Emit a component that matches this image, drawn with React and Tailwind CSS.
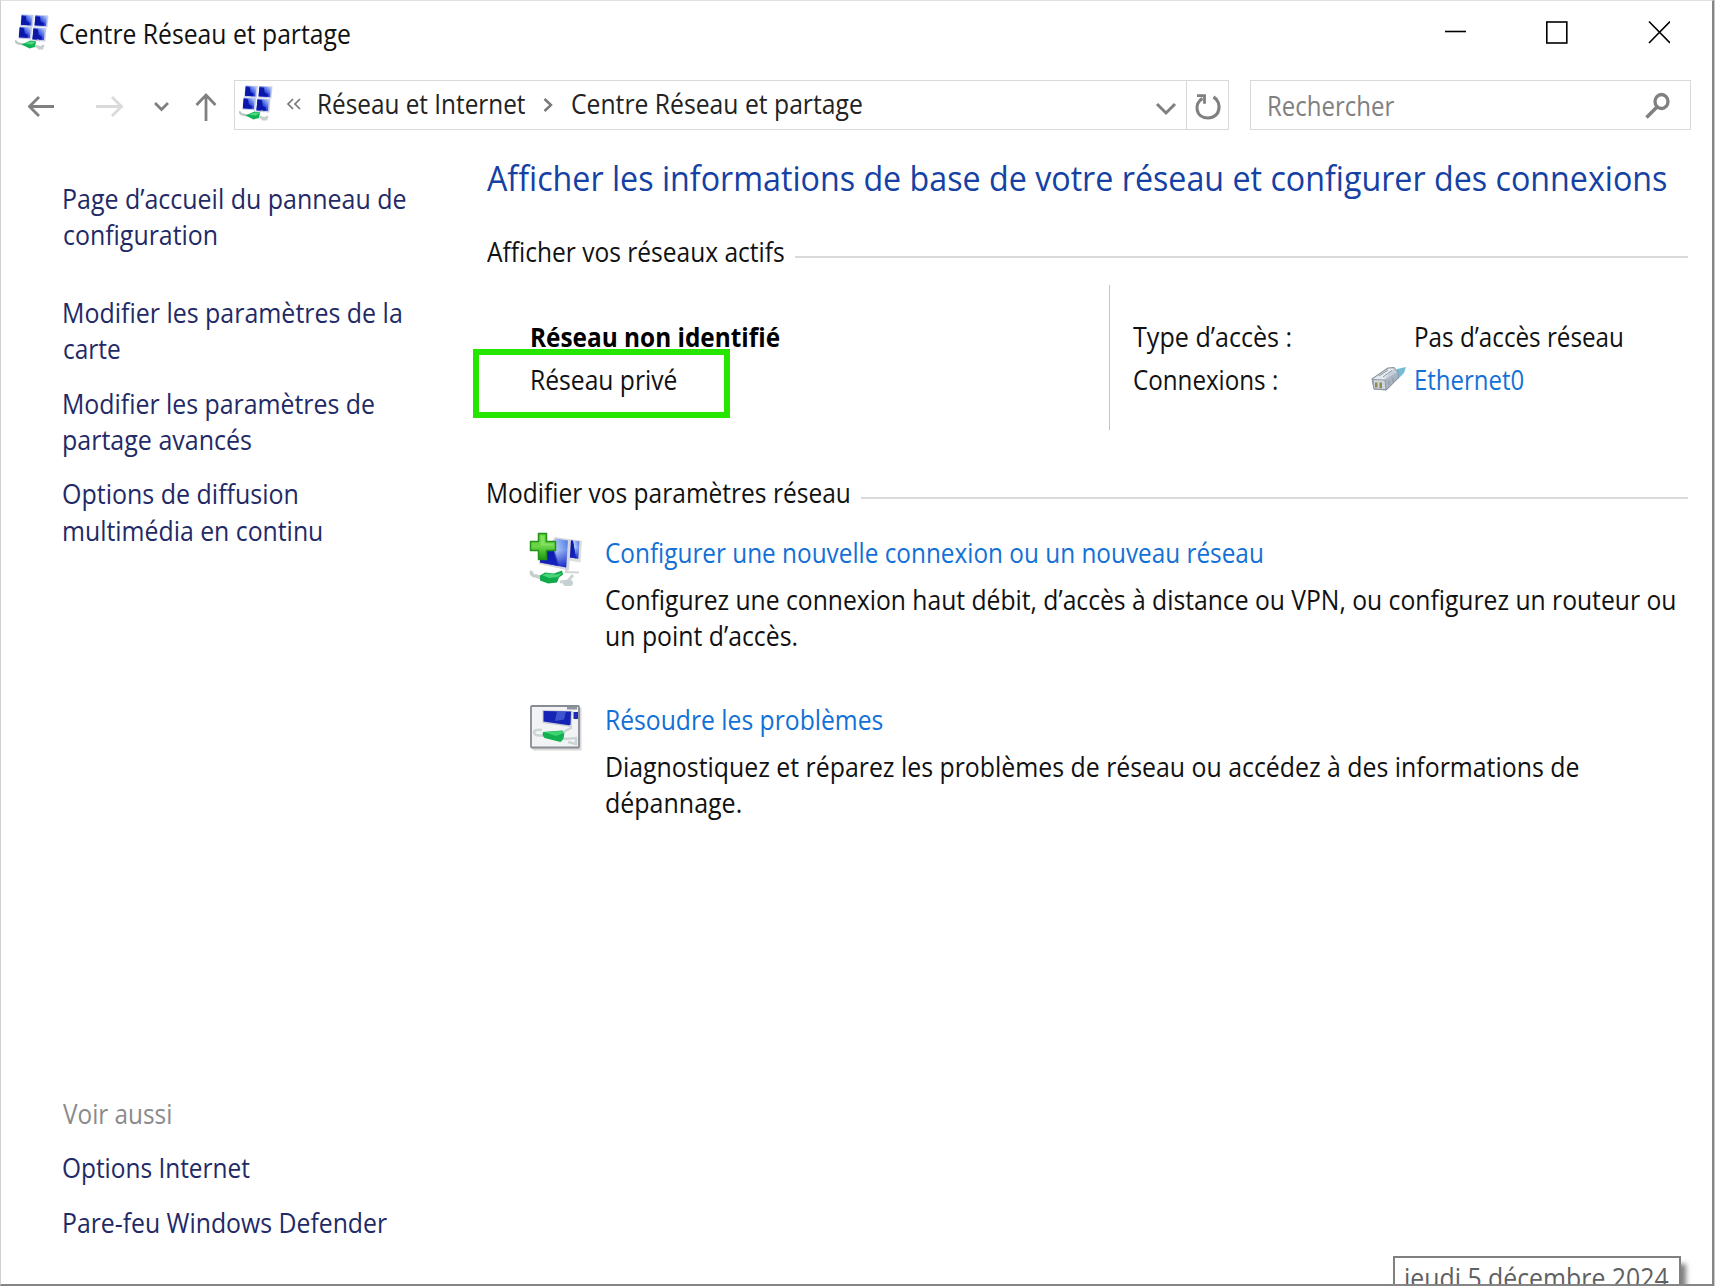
import { useLayoutEffect, useRef, useState } from 'react';

/* One line of text, condensed horizontally so that it fills its box. */
function Line({ w, className = '', children }) {
  const ref = useRef(null);
  const [k, setK] = useState(1);
  useLayoutEffect(() => {
    setK(w / ref.current.offsetWidth);
  }, [w]);
  return (
    <div className={`shrink-0 whitespace-nowrap ${className}`} style={{ width: w }}>
      <span ref={ref} className="inline-block origin-left" style={{ transform: `scaleX(${k})` }}>
        {children}
      </span>
    </div>
  );
}

function Monitor({ x, y, w = 12, h = 12 }) {
  return (
    <g transform={`translate(${x} ${y}) skewX(-5) skewY(4)`}>
      <rect x="-0.5" y="-0.8" width={w + 2} height={h + 1.4} fill="#c9cbe4" />
      <rect width={w} height={h - 0.8} fill="url(#screen)" />
      <path d={`M0 1h${w * 0.4}l1 ${h * 0.45}l${w * 0.3} 1.5V${h - 0.8}H0Z`} fill="#0a17a8" />
    </g>
  );
}

function NetworkIcon() {
  return (
    <svg width="35" height="38" viewBox="0 0 35 38" className="shrink-0">
      <defs>
        <linearGradient id="screen" x1="0" y1="1" x2="1" y2="0">
          <stop offset="0" stopColor="#1526c4" />
          <stop offset="0.5" stopColor="#2a45dc" />
          <stop offset="1" stopColor="#b9d0fb" />
        </linearGradient>
      </defs>
      <Monitor x={6.8} y={1} w={10.5} h={10.5} />
      <Monitor x={20.5} y={1.5} w={11.5} h={10.5} />
      <Monitor x={4.8} y={13} w={11} h={11} />
      <Monitor x={18.5} y={14} w={11.5} h={12} />
      <path d="M20 27.5l3-1.5 2 1" fill="none" stroke="#c8cccf" strokeWidth="1.2" />
      <path d="M1.5 26.5c-1 1 0 2.500 1.500 2.800l6 1.200" fill="none" stroke="#b9c6c0" strokeWidth="2.200" />
      <path d="M6.500 30.500l9-4 5.500 1-1 5.500-5.500 1.500Z" fill="#12b356" />
      <path d="M10 29.500l6-2 4 .6-3 2.400Z" fill="#4fdc84" />
      <path d="M20.500 32l5 1.500 3.500-2" fill="none" stroke="#c2ccc8" strokeWidth="2.500" />
      <rect x="22.500" y="32" width="6" height="3.600" rx="1.500" fill="#c6cfcc" />
    </svg>
  );
}

function AddNetworkIcon() {
  return (
    <svg width="56" height="58" viewBox="0 0 56 58" className="shrink-0">
      <defs>
        <linearGradient id="big" x1="0" y1="0.6" x2="1" y2="0.3">
          <stop offset="0" stopColor="#0a149a" />
          <stop offset="0.48" stopColor="#0c1cae" />
          <stop offset="0.55" stopColor="#b4cdf8" />
          <stop offset="1" stopColor="#5f84e8" />
        </linearGradient>
        <linearGradient id="bigFade" x1="0" y1="0" x2="0" y2="1">
          <stop offset="0.4" stopColor="#1426c4" stopOpacity="0" />
          <stop offset="1" stopColor="#1426c4" />
        </linearGradient>
        <linearGradient id="plus" x1="0" y1="0" x2="0" y2="1">
          <stop offset="0" stopColor="#58d02f" />
          <stop offset="0.5" stopColor="#6ad548" />
          <stop offset="1" stopColor="#1d9a10" />
        </linearGradient>
      </defs>
      <path d="M39 7l14 1.500-1.500 22-12.500-2Z" fill="#dedede" />
      <path d="M40 8l10.500 1.200-1.300 17.500-9.200-1.500Z" fill="url(#big)" />
      <path d="M40 8l10.500 1.200-1.300 17.500-9.200-1.500Z" fill="url(#bigFade)" />
      <path d="M26 5l16 2.500-2 31L10 32l1-6Z" fill="#d7d8dc" />
      <path d="M26 6.500l13 2-1.800 27L11 30.500V20l15-5Z" fill="url(#big)" />
      <path d="M26 6.500l13 2-1.800 27L11 30.500V20l15-5Z" fill="url(#bigFade)" />
      <path d="M38 36l-1 4 13 .5" fill="none" stroke="#d2d3d3" strokeWidth="2" />
      <path d="M3 39c-2 3 1 5 4 5l7 2" fill="none" stroke="#c4cfca" strokeWidth="3.500" />
      <path d="M11 43.500l5-3 9 1 8-3 1 4-4 3-2 5-9 1-8-3Z" fill="#10a94c" />
      <path d="M13 43l5-1.500 9 1 6-1.500-4 4-9 1Z" fill="#46d479" />
      <path d="M31 50l8-1 5-6" fill="none" stroke="#cdd5d2" strokeWidth="3" />
      <rect x="34" y="48" width="10" height="6" rx="3" fill="#c5d0d2" />
      <path d="M9.500 1.500h8v8h9v9h-9v9h-8v-9h-8v-9h8Z" fill="url(#plus)" stroke="#23921a" strokeWidth="1.500" strokeLinejoin="round" />
      <path d="M11.500 3.500h4v8h9v2H11.500Z" fill="#9be878" opacity="0.6" />
    </svg>
  );
}

function TroubleshootIcon() {
  return (
    <svg width="52" height="46" viewBox="0 0 52 46" className="shrink-0">
      <rect x="2.500" y="2.500" width="49" height="43" rx="1" fill="#d9d9d9" />
      <rect x="1" y="1" width="48" height="41.500" rx="1" fill="#f1f3f4" stroke="#878c92" strokeWidth="1.800" />
      <path d="M37 2h10v2.500H37Z" fill="#8e969f" />
      <path d="M12.500 5l30 1-1 16-29-4Z" fill="#c9cbd4" />
      <path d="M13.500 6l27.500 .5-.5 14-27-4Z" fill="#1524b4" />
      <path d="M27 6.200l9 .4-2 8-9 1.500Z" fill="#4f69d8" opacity="0.7" />
      <path d="M43.500 7h4.500v7h-4.500Z" fill="#1c2cb8" />
      <path d="M12 25c-8-1-10 2-6 5l8 1" fill="none" stroke="#cdd6d4" strokeWidth="2.500" />
      <path d="M13 27l19-1.500 2.500 1.500-1 7-3 3-16-4-2-3Z" fill="#12b04e" />
      <path d="M14 27l17-1 3 2-8 3Z" fill="#3fd275" />
      <path d="M33 27l8-4-1-3M34 34l12-1v6l-8-2" fill="none" stroke="#cbd4d6" strokeWidth="2.400" />
    </svg>
  );
}

function EthernetIcon() {
  return (
    <svg width="36" height="26" viewBox="0 0 36 26" className="shrink-0">
      <path d="M24 8l2-5 9-2-2 6-6 6Z" fill="#74bcd6" />
      <path d="M1 13L17 2l6-.5 4 4.500v6L15 24 3 23Z" fill="#c5ced9" stroke="#8b939c" strokeWidth="1.100" strokeLinejoin="round" />
      <path d="M2 13l15-10 6-.5-9 9.500-1 3Z" fill="#e6ebf0" />
      <path d="M14 14L26 6v6L15 23Z" fill="#a9b4c2" />
      <path d="M2 13.500l12 .5 1 9.500-12-.7Z" fill="#cfd6dd" stroke="#8b939c" strokeWidth="0.900" />
      <path d="M4 16.500h2.500v5H4ZM8.500 16.500H11v5.500H8.500Z" fill="#8d8c4b" />
      <path d="M8 10l9-6M12 11l9-6.500M18 15v4M22 12v4" stroke="#8a94a0" strokeWidth="1" />
    </svg>
  );
}

function TitleBar() {
  return (
    <div className="flex h-[69px] items-start pt-[15px]">
      <div className="-mt-0.5 ml-[14px]"><NetworkIcon /></div>
      <Line w={292} className="ml-[9px]">Centre Réseau et partage</Line>
      <svg width="226" height="24" viewBox="0 0 226 24" className="mt-[4px] mr-[42px] ml-auto" fill="none" stroke="#000">
        <path d="M1 11.500H22" strokeWidth="1.600" />
        <rect x="102.800" y="2" width="20" height="21" strokeWidth="1.600" />
        <path d="M205 1.500L226 23M226 1.500L205 23" strokeWidth="1.600" />
      </svg>
    </div>
  );
}

function NavBar() {
  return (
    <div className="flex h-[66px] items-start pt-2.5">
      <svg width="206" height="50" viewBox="0 0 206 50" className="ml-[27px] shrink-0" fill="none" strokeWidth="2.800">
        <path d="M1.500 26.500H26M11 17L1.500 26.500L11 36" stroke="#808080" />
        <path d="M68 26.500H93M84 17L93.500 26.500L84 36" stroke="#dadada" />
        <path d="M127 23L133.500 29.500L140 23" stroke="#808080" strokeWidth="2.800" />
        <path d="M178 15V41M168.500 25L178 15L187.500 25" stroke="#808080" />
      </svg>
      <div className="flex h-[50px] w-[995px] shrink-0 border-[1.500px] border-[#d9d9d9]">
        <div className="mt-1 ml-[4px]"><NetworkIcon /></div>
        <svg width="16" height="14" viewBox="0 0 16 14" className="mt-[16px] ml-[12px] shrink-0" fill="none" stroke="#777" strokeWidth="1.700">
          <path d="M7 2L2 7L7 12M14 2L9 7L14 12" />
        </svg>
        <Line w={209} className="mt-[5px] ml-[15px] text-[#222]">Réseau et Internet</Line>
        <svg width="10" height="16" viewBox="0 0 10 16" className="mt-4 ml-[17px] shrink-0" fill="none" stroke="#777" strokeWidth="2.400">
          <path d="M1.500 2L8 8L1.500 14" />
        </svg>
        <Line w={292} className="mt-[5px] ml-[18px] text-[#222]">Centre Réseau et partage</Line>
        <svg width="22" height="14" viewBox="0 0 22 14" className="mt-[21px] mr-[9px] ml-auto shrink-0" fill="none" stroke="#808080" strokeWidth="3">
          <path d="M2 2L11 11L20 2" />
        </svg>
        <div className="flex w-[42px] shrink-0 border-l border-[#d9d9d9] pt-[12px] pl-[7px]">
          <svg width="28" height="28" viewBox="0 0 28 28" fill="none" stroke="#808080" strokeWidth="3.200">
            <path d="M8.500 5.500C0 10 1 25 14 25C27 25 28 9 19.500 4" />
            <path d="M3 2.700h7.500v8" strokeWidth="2.800" />
          </svg>
        </div>
      </div>
      <div className="ml-[21px] flex h-[50px] w-[441px] shrink-0 border-[1.500px] border-[#d9d9d9] text-[#808080]">
        <Line w={127} className="mt-[7px] ml-[16px]">Rechercher</Line>
        <svg width="28" height="28" viewBox="0 0 28 28" className="mt-[11px] mr-[18px] ml-auto" fill="none" stroke="#808080" strokeWidth="3.300">
          <ellipse cx="17.500" cy="9.500" rx="6.500" ry="7" />
          <path d="M13 15L2.500 25.500" strokeWidth="3.600" />
        </svg>
      </div>
    </div>
  );
}

function Sidebar() {
  return (
    <nav className="flex w-[485px] shrink-0 flex-col pt-[45px] pl-[61px] leading-[36.400px] text-[#1f2a66]">
      <div>
        <Line w={345}>Page d’accueil du panneau de</Line>
        <Line w={155} className="ml-px">configuration</Line>
      </div>
      <div className="mt-[41px]">
        <Line w={341}>Modifier les paramètres de la</Line>
        <Line w={58} className="ml-px">carte</Line>
      </div>
      <div className="mt-[18px]">
        <Line w={313}>Modifier les paramètres de</Line>
        <Line w={190}>partage avancés</Line>
      </div>
      <div className="mt-[18px]">
        <Line w={237}>Options de diffusion</Line>
        <Line w={261}>multimédia en continu</Line>
      </div>
      <div className="mt-auto flex flex-col gap-[18px] pb-[43px]">
        <Line w={109} className="ml-px text-[#8a8a8a]">Voir aussi</Line>
        <Line w={188}>Options Internet</Line>
        <Line w={325}>Pare-feu Windows Defender</Line>
      </div>
    </nav>
  );
}

function SectionTitle({ w, inset, children }) {
  return (
    <div className={`flex h-9 ${inset}`}>
      <Line w={w} className="mt-px">{children}</Line>
      <div className="mt-[23px] mr-0.5 ml-2.5 h-0.5 flex-1 bg-[#d9d9d9]" />
    </div>
  );
}

function ActiveNetwork() {
  return (
    <div className="mt-4 flex h-[145px] pl-[44px]">
      <div className="w-[579px] shrink-0 pt-[34px]">
        <Line w={250} className="font-bold text-black">Réseau non identifié</Line>
        <div className="relative mt-[7px]">
          <Line w={147}>Réseau privé</Line>
          <div className="absolute -top-[13px] -left-[57px] h-[69px] w-[257px] border-[6px] border-[#26e600]" />
        </div>
      </div>
      <div className="flex h-[145px] border-l-[1.500px] border-[#c4c4c4] pt-[34px]">
        <div className="ml-[23px] w-[238px]">
          <Line w={159}>Type d’accès :</Line>
          <Line w={145} className="mt-[7px]">Connexions :</Line>
        </div>
        <div>
          <Line w={210} className="ml-[43px]">Pas d’accès réseau</Line>
          <div className="mt-[7px] flex">
            <div className="mt-[4px] w-[43px]"><EthernetIcon /></div>
            <Line w={110} className="text-[#1270d6]">Ethernet0</Line>
          </div>
        </div>
      </div>
    </div>
  );
}

function Main() {
  return (
    <main className="w-[1204px] shrink-0 pt-[18px]">
      <Line w={1180} className="ml-px text-[35px] leading-[48px] text-[#1441a3]">
        Afficher les informations de base de votre réseau et configurer des connexions
      </Line>
      <SectionTitle w={298} inset="mt-[31px] pl-px">Afficher vos réseaux actifs</SectionTitle>
      <ActiveNetwork />
      <SectionTitle w={365} inset="mt-11">Modifier vos paramètres réseau</SectionTitle>
      <div className="mt-[25px] flex pl-[43px]">
        <div className="-mt-[3px] w-[76px] shrink-0"><AddNetworkIcon /></div>
        <div>
          <Line w={659}>
            <span className="text-[#1270d6]">Configurer une nouvelle connexion ou un nouveau réseau</span>
          </Line>
          <div className="mt-[11px] leading-[36.400px]">
            <Line w={1071}>Configurez une connexion haut débit, d’accès à distance ou VPN, ou configurez un routeur ou</Line>
            <Line w={193}>un point d’accès.</Line>
          </div>
        </div>
      </div>
      <div className="mt-[47px] flex pl-[44px]">
        <div className="w-[75px] shrink-0 pt-[3px]"><TroubleshootIcon /></div>
        <div>
          <Line w={278} className="text-[#1270d6]">Résoudre les problèmes</Line>
          <div className="mt-[11px] leading-[36.400px]">
            <Line w={974}>Diagnostiquez et réparez les problèmes de réseau ou accédez à des informations de</Line>
            <Line w={137}>dépannage.</Line>
          </div>
        </div>
      </div>
    </main>
  );
}

export default function App() {
  return (
    <div className="h-[1286px] w-[1715px] overflow-hidden bg-[#c8c8c8]">
      <div className="relative flex h-[1286px] w-[1714px] flex-col overflow-hidden border-t border-r-2 border-b-2 border-l border-t-[#e0e0e0] border-r-[#858585] border-b-[#858585] border-l-[#d0d0d0] bg-white font-['Open_Sans',sans-serif] text-[27px] leading-9 text-[#111] [font-variant-ligatures:none]">
        <TitleBar />
        <NavBar />
        <div className="flex flex-1">
          <Sidebar />
          <Main />
        </div>
        <div className="absolute top-[1255px] left-[1392px] h-12 w-[288px] border-2 border-[#808080] bg-white pt-[2px] pl-[9px] text-[#606060] shadow-[5px_8px_5px_#00000080]">
          <Line w={265}>jeudi 5 décembre 2024</Line>
        </div>
      </div>
    </div>
  );
}
